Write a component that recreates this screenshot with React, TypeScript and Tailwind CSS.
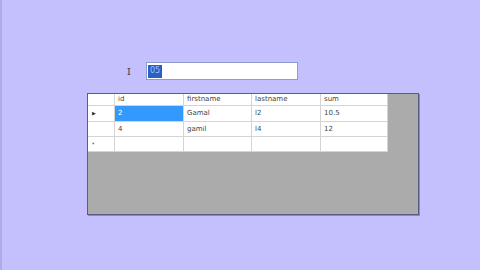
import React from 'react';

const cols = ['id', 'firstname', 'lastname', 'sum'];

const rows = [
    { marker: '▶', cells: ['2', 'Gamal', 'l2', '10.5'] },
    { marker: '', cells: ['4', 'gamil', 'l4', '12'] },
    { marker: '*', cells: ['', '', '', ''] },
];

const Cell: React.FC<{ text: string; selected?: boolean }> = ({ text, selected }) => (
    <div
        className={
            'flex items-center pl-[3px] border-r border-b border-[#d4d4d4] text-[7px] leading-none ' +
            (selected ? 'bg-[#3399ff] text-white' : 'bg-white text-[#444]')
        }
    >
        {text}
    </div>
);

const App: React.FC = () => {
    return (
        <div
            className="w-[480px] h-[270px] bg-[#c4c0fe] border-l-2 border-[#aeabeb] overflow-hidden"
            style={{ fontFamily: 'Tahoma, "DejaVu Sans", "Liberation Sans", sans-serif' }}
        >
            <div className="pt-[62px] pl-[125px] flex items-center">
                <span className="w-[19px] text-[11px] leading-none text-[#444] font-serif">I</span>
                <div className="w-[152px] h-[18px] bg-white border border-[#8e9ccc] flex items-center pl-px">
                    <span className="bg-[#2a5fc4] text-[#9fc0ff] text-[8px] h-[13px] px-[2px] flex items-center">05</span>
                </div>
            </div>

            <div className="mt-[13px] ml-[85px] w-[332px] h-[122px] border border-[#5a5a82] bg-[#ababab] shadow-[1px_1px_0_#8a88c0]">
                <div className="w-[300px] grid grid-cols-[27px_69px_68px_69px_67px] grid-rows-[12px_16px_15px_15px]">
                    <div className="bg-white border-r border-b border-[#d4d4d4]" />
                    {cols.map(c => (
                        <div key={c} className="bg-white border-r border-b border-[#d4d4d4] flex items-center pl-[3px] text-[7px] leading-none text-[#444]">
                            {c}
                        </div>
                    ))}
                    {rows.map((r, i) => (
                        <React.Fragment key={i}>
                            <div className="bg-white border-r border-b border-[#d4d4d4] flex items-center pl-[4px] text-[5px] leading-none text-[#333]">
                                {r.marker}
                            </div>
                            {r.cells.map((c, j) => (
                                <Cell key={j} text={c} selected={i === 0 && j === 0} />
                            ))}
                        </React.Fragment>
                    ))}
                </div>
            </div>
        </div>
    );
};

export default App;
